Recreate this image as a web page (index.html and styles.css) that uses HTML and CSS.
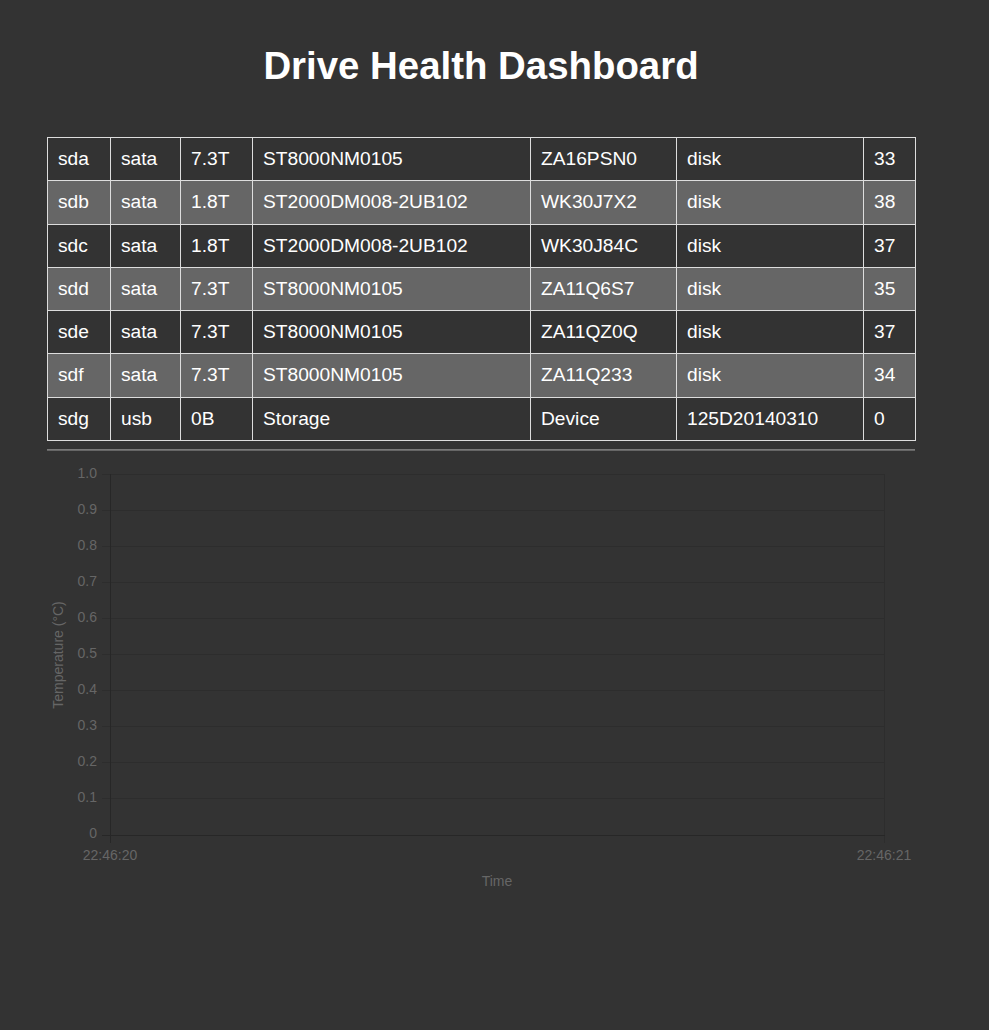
FILE: index.html
```html
<!DOCTYPE html>
<html lang="en">
<head>
<meta charset="utf-8">
<title>Drive Health Dashboard</title>
<link rel="stylesheet" href="styles.css">
</head>
<body>
<div class="page">
  <h1 class="title">Drive Health Dashboard</h1>
  <table class="drives">
    <colgroup>
      <col class="c1"><col class="c2"><col class="c3"><col class="c4"><col class="c5"><col class="c6"><col class="c7">
    </colgroup>
    <tbody>
      <tr><td>sda</td><td>sata</td><td>7.3T</td><td>ST8000NM0105</td><td>ZA16PSN0</td><td>disk</td><td>33</td></tr>
      <tr><td>sdb</td><td>sata</td><td>1.8T</td><td>ST2000DM008-2UB102</td><td>WK30J7X2</td><td>disk</td><td>38</td></tr>
      <tr><td>sdc</td><td>sata</td><td>1.8T</td><td>ST2000DM008-2UB102</td><td>WK30J84C</td><td>disk</td><td>37</td></tr>
      <tr><td>sdd</td><td>sata</td><td>7.3T</td><td>ST8000NM0105</td><td>ZA11Q6S7</td><td>disk</td><td>35</td></tr>
      <tr><td>sde</td><td>sata</td><td>7.3T</td><td>ST8000NM0105</td><td>ZA11QZ0Q</td><td>disk</td><td>37</td></tr>
      <tr><td>sdf</td><td>sata</td><td>7.3T</td><td>ST8000NM0105</td><td>ZA11Q233</td><td>disk</td><td>34</td></tr>
      <tr><td>sdg</td><td>usb</td><td>0B</td><td>Storage</td><td>Device</td><td>125D20140310</td><td>0</td></tr>
    </tbody>
  </table>
  <hr class="divider">
  <svg class="chart" width="868" height="440" viewBox="0 0 868 440">
    <g class="grid">
      <line x1="55" y1="14.5" x2="838" y2="14.5"/>
      <line x1="55" y1="50.5" x2="838" y2="50.5"/>
      <line x1="55" y1="86.5" x2="838" y2="86.5"/>
      <line x1="55" y1="122.5" x2="838" y2="122.5"/>
      <line x1="55" y1="158.5" x2="838" y2="158.5"/>
      <line x1="55" y1="194.5" x2="838" y2="194.5"/>
      <line x1="55" y1="230.5" x2="838" y2="230.5"/>
      <line x1="55" y1="266.5" x2="838" y2="266.5"/>
      <line x1="55" y1="302.5" x2="838" y2="302.5"/>
      <line x1="55" y1="338.5" x2="838" y2="338.5"/>
      <line x1="837.5" y1="14" x2="837.5" y2="383"/>
    </g>
    <g class="axis">
      <line x1="55" y1="375.5" x2="838" y2="375.5"/>
      <line x1="63.5" y1="14" x2="63.5" y2="383"/>
    </g>
    <g class="ticks ylabels">
      <text x="50" y="14">1.0</text>
      <text x="50" y="50">0.9</text>
      <text x="50" y="86">0.8</text>
      <text x="50" y="122">0.7</text>
      <text x="50" y="158">0.6</text>
      <text x="50" y="194">0.5</text>
      <text x="50" y="230">0.4</text>
      <text x="50" y="266">0.3</text>
      <text x="50" y="302">0.2</text>
      <text x="50" y="338">0.1</text>
      <text x="50" y="374">0</text>
    </g>
    <g class="ticks xlabels">
      <text x="63" y="396">22:46:20</text>
      <text x="837" y="396">22:46:21</text>
    </g>
    <text class="axis-title" x="450" y="422">Time</text>
    <text class="axis-title" transform="translate(12 195) rotate(-90)" x="0" y="0">Temperature (°C)</text>
  </svg>
</div>
</body>
</html>
```
FILE: styles.css
```css
html, body {
  margin: 0;
  padding: 0;
  background: #333333;
}

body {
  font-family: "Liberation Sans", Arial, Helvetica, sans-serif;
  color: #ffffff;
}

.page {
  width: 868px;
  margin-left: 47px;
  padding-top: 44px;
}

.title {
  margin: 0 0 49px 0;
  font-size: 38.4px;
  font-weight: bold;
  text-align: center;
  line-height: normal;
}

.drives {
  width: 868px;
  border-collapse: collapse;
  table-layout: fixed;
  font-size: 19.2px;
}

.c1 { width: 63px; }
.c2 { width: 70px; }
.c3 { width: 72px; }
.c4 { width: 278px; }
.c5 { width: 146px; }
.c6 { width: 187px; }
.c7 { width: 52px; }

.drives td {
  border: 1px solid #dddddd;
  padding: 10px 10px 10px 10px;
  line-height: 22.3px;
  white-space: nowrap;
  text-align: left;
}

.drives tr:nth-child(even) td {
  background: #666666;
}

.divider {
  margin: 8px 0 9px 0;
  height: 0;
  border: 0;
  border-top: 1px solid #7a7a7a;
  border-bottom: 1px solid #666666;
}

.chart {
  display: block;
  font-family: "Liberation Sans", Arial, Helvetica, sans-serif;
}

.grid line {
  stroke: #2d2d2d;
  stroke-width: 1;
}

.axis line {
  stroke: #272727;
  stroke-width: 1;
}

.ticks text,
.axis-title {
  fill: #666666;
  font-size: 14px;
  dominant-baseline: middle;
}

.ylabels text {
  text-anchor: end;
}

.xlabels text,
.axis-title {
  text-anchor: middle;
}
```
